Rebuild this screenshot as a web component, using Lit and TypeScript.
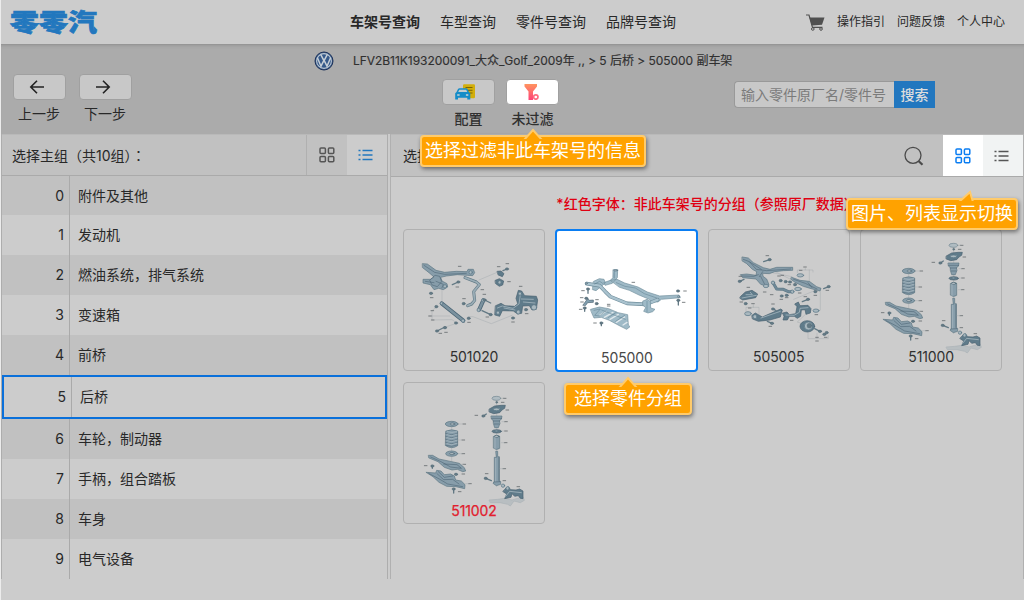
import { LitElement, html, svg, css } from "lit";
import { customElement } from "lit/decorators.js";
import { classMap } from "lit/directives/class-map.js";

const GROUPS = ["附件及其他", "发动机", "燃油系统，排气系统", "变速箱", "前桥", "后桥", "车轮，制动器", "手柄，组合踏板", "车身", "电气设备"];

const gridIcon = () => html`<svg width="16" height="16" viewBox="0 0 16 16" fill="none" stroke="currentColor" stroke-width="1.5">
  <rect x="1" y="1" width="5.4" height="5.4" rx="1"/><rect x="9.4" y="1" width="5.4" height="5.4" rx="1"/>
  <rect x="1" y="9.4" width="5.4" height="5.4" rx="1"/><rect x="9.4" y="9.4" width="5.4" height="5.4" rx="1"/></svg>`;

const listIcon = () => html`<svg class="list" width="15" height="12" viewBox="0 0 15 12" fill="none" stroke="currentColor" stroke-width="1.7">
  <path d="M0.5 1.5h2M0.5 6h2M0.5 10.5h2M4.5 1.5h10M4.5 6h10M4.5 10.5h10"/></svg>`;

/* Small callout marks: a dash and a numeral-like tick. */
const marks = (pts: number[][]) => pts.map(([x, y]) => svg`<path class="mark" d="M${x - 4} ${y}h8"/>`);
/* Bolts and nuts, drawn as a head with a short shank. */
const bolts = (pts: number[][]) => pts.map(([x, y, dx = 0, dy = 0]) => svg`
  <path class="shank" d="M${x} ${y}l${dx} ${dy}"/><ellipse class="nut" cx="${x}" cy="${y}" rx="5" ry="4"/>`);

const suspension = () => svg`
  <path class="thin" d="M142 190V245M185 310L150 322M253 180L305 158M222 290L235 290L290 311L352 286M112 272V300L172 299L182 306M104 288H112M112 272L124 262M112 288H165"/>
  <path class="pt" d="M84 131L98 132L124 151L150 157L185 154L217 155L220 148L236 148L240 158L234 167L218 166L188 164L155 168L138 172L142 183L157 191L159 201L146 209L132 205L118 209L107 194L85 189V178L107 178L118 171L103 158L84 143Z"/>
  <path class="dark" d="M88 136L120 157L150 163L215 160M106 180L121 166L135 169L141 185L128 200L113 195ZM124 184L146 193L142 203M92 184L118 188"/>
  <circle class="ring" cx="228" cy="157" r="5"/><circle class="ring" cx="151" cy="199" r="5"/>
  <path class="tubeo" d="M211 173L245 186L254 194L237 215L240 241L231 252L219 257"/><path class="tube" d="M211 173L245 186L254 194L237 215L240 241L231 252L219 257"/>
  <path class="armo" d="M141 250L206 302"/><path class="arm" d="M141 250L206 302"/><circle class="ring" cx="141" cy="250" r="4"/><circle class="ring" cx="205" cy="302" r="5"/>
  <path class="dk" d="M308 154L319 153L328 161L323 170L311 165ZM302 181L314 176L327 183L324 195L314 199L303 191Z"/>
  <circle class="ring" cx="315" cy="187" r="5"/>
  <path class="armo" d="M266 241L254 268"/><path class="arm" d="M266 241L254 268"/><circle class="ring" cx="266" cy="241" r="5"/><circle class="ring" cx="252" cy="270" r="5"/>
  <path class="dk" d="M303 257L319 250L331 257L360 259L369 251L364 235L371 211L381 213L390 227L425 229L429 240L425 268L412 270L404 257L384 258L381 280L369 282L356 273L323 272L315 289L301 285Z"/>
  <path class="light" d="M308 264L323 258L355 265L373 252L377 224M380 237L416 238M386 246L421 249M328 264L361 270"/>
  <circle class="ring" cx="376" cy="221" r="5"/><circle class="ring" cx="418" cy="262" r="8"/><circle class="ring" cx="371" cy="276" r="6"/><circle class="ring" cx="310" cy="278" r="5"/>
  ${bolts([[191, 186, -18, 8], [109, 220], [207, 251], [222, 295], [288, 284, -26, -12], [125, 260], [184, 309], [127, 333, 24, -12], [151, 323], [337, 147, -12, 5], [355, 294], [394, 269], [270, 240, 18, 9]])}
  ${marks([[195, 139], [188, 201], [111, 233], [263, 209], [208, 236], [269, 223], [312, 140], [338, 131], [343, 185], [378, 199], [278, 291], [223, 307], [355, 306], [396, 281], [106, 288], [113, 272], [114, 300], [137, 340], [154, 337]])}`;

const subframe = () => svg`
  <path class="pt" d="M190 149L203 149L202 173L187 190L165 196L161 188L181 181L188 174ZM131 184L148 176L162 178L166 189L154 199L138 212L128 209ZM182 181L201 178L224 189L264 201L292 216L329 228L387 225L391 233L334 238L324 246L305 245L298 238L267 225L238 211L209 202Z"/>
  <path class="tubeo" d="M110 191L149 197L165 214L181 230L231 250L288 253L323 239"/><path class="tube" d="M110 191L149 197L165 214L181 230L231 250L288 253L323 239"/>
  <path class="pt" d="M279 243L291 238L301 244L302 264L315 268L308 275L294 279L281 274L287 263L279 256Z"/>
  <path class="dark" d="M199 188L225 199L256 204L283 221L320 234M134 192L149 184L158 190M291 244V275M193 154V174"/>
  <ellipse class="ring" cx="197" cy="151" rx="6" ry="2"/><circle class="ring" cx="109" cy="190" r="3"/><circle class="ring" cx="386" cy="230" r="3"/>
  <path class="pt" d="M122 268L148 261L176 266L204 278L233 284L235 315L240 320L230 328L210 318L178 301L154 292L132 294L127 283Z"/>
  <path class="slot" d="M150 285L169 273M163 292L189 277M180 298L205 283M199 307L224 291M219 315L231 307"/>
  <path class="dark" d="M132 271L151 267L134 286L148 288L170 270M174 293L199 277M197 304L224 286M155 270L226 298"/>
  <path class="dk" d="M99 255L113 236L119 241L130 240L130 247L113 248L107 256Z"/>
  ${bolts([[114, 207, 0, 13], [384, 213], [385, 241, 0, 14], [104, 264, 0, 10], [109, 235], [140, 251], [154, 309, 0, 8]])}
  ${marks([[99, 212], [92, 268], [95, 233], [96, 246], [141, 239], [176, 258], [176, 253], [250, 187], [405, 213], [401, 247], [135, 309]])}`;

const axle = () => svg`
  <path class="thin" d="M190 154L270 170M175 184L193 199M275 238L355 205V270M320 274L286 306L310 314M310 145V150H286V158M310 150H333V156M322 150V187M154 254V262H132V272M154 262H171V285M318 330V356H379V347M345 340V356M210 150L270 180"/>
  <path class="pt" d="M121 111L139 114L154 128L184 143L204 148L224 142L272 142V151L244 152L218 155L202 161L182 160L183 169L194 177L201 194L192 198L176 193L162 177L122 173L115 164L134 162L162 166L164 155L151 148L134 131L121 123Z"/>
  <path class="dark" d="M124 118L142 125L163 148L194 152L266 147M121 168L155 169L169 164M176 169L187 191M182 155L172 170M143 126L178 148"/>
  <path class="tubeo" d="M213 188L224 207L244 208L259 215L270 215"/><path class="tube dkt" d="M213 188L224 207L244 208L259 215L270 215"/><circle class="ring" cx="213" cy="188" r="5"/><circle class="ring" cx="271" cy="215" r="5"/>
  <path class="pt" d="M269 172L294 181L322 184L344 200L357 205L354 213L331 207L304 199L279 187L267 178Z"/><path class="dark" d="M275 178L310 190L345 207M318 188L330 203"/>
  <path class="dk" d="M116 229L130 216L150 211L167 222L161 233L122 240L114 235Z"/><path class="light" d="M120 234L163 226M132 224H151L145 217"/>
  <path class="dk" d="M150 286L160 279L169 284L181 291L208 279L236 267L241 270L235 291L204 300L169 304L152 297Z"/><path class="light" d="M177 294L235 274"/><circle class="ring" cx="159" cy="290" r="6"/>
  <path class="dk" d="M242 279L255 276L262 284L281 281L285 260L278 252L289 246L294 257L318 256L327 266L325 279L312 283L309 269L298 270L296 289L286 295L277 289H262L256 300L243 300L246 290Z"/><path class="light" d="M252 285L276 286L292 277L294 265L318 263"/>
  <ellipse class="dk" cx="316" cy="319" rx="22" ry="17"/><circle class="ring" cx="319" cy="318" r="12"/><circle class="nut" cx="322" cy="317" r="7"/>
  <ellipse class="ring" cx="138" cy="281" rx="10" ry="6"/><ellipse class="ring" cx="295" cy="166" rx="10" ry="5"/><ellipse class="ring" cx="288" cy="207" rx="10" ry="5"/><ellipse class="ring" cx="342" cy="272" rx="9" ry="5"/><ellipse class="ring" cx="192" cy="198" rx="8" ry="5"/>
  ${bolts([[203, 119, -18, 6], [113, 184, 13, -6], [380, 200, -15, 6], [131, 251], [213, 267, 9, 5], [210, 310, -14, -6], [318, 238, -17, 7], [354, 334, -16, -8], [367, 343], [374, 338], [236, 182], [251, 185], [239, 228], [254, 226], [264, 186], [340, 215], [279, 194]])}
  ${marks([[196, 107], [115, 169], [139, 202], [118, 246], [143, 264], [153, 251], [213, 252], [209, 224], [188, 216], [231, 168], [241, 166], [238, 238], [254, 233], [262, 194], [293, 219], [343, 284], [376, 211], [340, 226], [309, 141], [205, 319], [269, 301], [345, 363], [345, 352], [371, 352], [310, 230], [296, 151]])}`;

const strut = () => svg`
  <path class="thin" d="M161 150V270M296 74V340M161 270V290"/>
  <ellipse class="pt" cx="161" cy="153" rx="19" ry="8"/><ellipse class="hole" cx="163" cy="153" rx="7" ry="3"/>
  <path class="pt" d="M144 174Q161 167 179 174V218Q161 230 143 218Z"/>
  <path class="dark" d="M143 181Q161 190 179 180M143 190Q161 199 179 189M143 199Q161 208 179 198M143 208Q161 217 179 207M144 217Q161 224 178 216"/><path class="light" d="M148 176Q161 182 176 176M147 185Q161 192 176 184M147 194Q161 201 176 193M147 203Q161 210 176 202M147 212Q161 219 176 211"/>
  <ellipse class="pt" cx="161" cy="242" rx="18" ry="8"/><ellipse class="hole" cx="162" cy="242" rx="7" ry="3"/>
  <path class="pt" d="M92 247L104 247L123 258L161 266L184 271L199 284L203 294L194 296L178 289L162 291L139 283L120 266L93 255Z"/><path class="dark" d="M98 252L129 266L158 282L190 286M137 273L177 275L188 284"/>
  <path class="pt" d="M85 298L113 300L116 292L129 294L139 305L158 303L169 309L173 321L190 324L201 335L200 347L174 341L146 340L123 328L106 312Z"/><path class="dark" d="M92 301L124 318L149 333L194 341M117 302L137 320L164 319L183 333M121 296L139 313L164 309"/>
  <ellipse class="pale" cx="295" cy="76" rx="13" ry="6"/><circle class="nut" cx="296" cy="88" r="3"/>
  <path class="dk" d="M274 108L290 99L310 97L322 97L320 106L312 111L305 119L287 122L274 117Z"/><ellipse class="ring" cx="296" cy="109" rx="10" ry="4"/>
  <path class="pt" d="M280 129H312L310 139L304 143L306 151L301 164H290L286 151V143L281 139Z"/><path class="dark" d="M281 136H311M286 144H305M289 153H303"/>
  <ellipse class="dk" cx="296" cy="175" rx="14" ry="5"/><ellipse class="ring" cx="296" cy="174" rx="5" ry="2"/>
  <path class="pt" d="M287 190Q296 184 305 190V226Q296 233 287 226Z"/><ellipse class="hole" cx="296" cy="190" rx="7" ry="3"/><path class="light" d="M291 194V227"/>
  <path class="pt" d="M294 235H299V251H304V325H308V334L295 338L285 331L289 325V253H294Z"/><path class="light" d="M293 256V325"/><path class="dark" d="M303 254V322M288 327L305 326"/>
  <path class="ghost" d="M274 381L299 379L322 376L342 381L375 371L379 382L367 389L348 384L337 399L329 394L306 389L278 389Z"/>
  <path class="dk" d="M322 347L331 341L338 350L354 351L365 348L375 354V377L367 376L361 368L350 370L342 362L339 373L320 377L326 363L315 356Z"/><path class="light" d="M323 370L335 355L370 359"/><circle class="ring" cx="315" cy="338" r="5"/><circle class="ring" cx="329" cy="346" r="5"/>
  ${bolts([[256, 129, 9, -6], [263, 316, 17, 7], [103, 279, 0, 7], [174, 304], [167, 348, 0, 12]])}
  ${marks([[199, 153], [196, 201], [196, 242], [199, 274], [196, 303], [216, 332], [185, 356], [83, 278], [320, 76], [314, 88], [328, 111], [235, 127], [324, 146], [324, 174], [323, 209], [319, 287], [266, 302], [319, 323], [361, 341]])}
  <path class="thin" d="M180 153h13M179 201h13M180 242h13M187 274h10M203 332h10M307 76h10M310 209h10M306 287h10M312 146h8M312 174h8"/>`;

@customElement("part-tile")
class PartTile extends LitElement {
  static properties = { code: {}, art: {}, view: {}, active: { type: Boolean }, foreign: { type: Boolean } };
  declare code: string; declare art: () => unknown; declare view: string; declare active: boolean; declare foreign: boolean;
  static styles = css`
    :host { display: block; }
    .tile { box-sizing: border-box; width: 142px; height: 142px; border: 1px solid #b0b0b0; border-radius: 4px; display: grid; grid-template: 100% / 100%; }
    .active { width: 143px; height: 143px; background: #fff; border: 2px solid #0a7df2; }
    .tile > * { grid-area: 1 / 1; }
    .art { width: 142px; height: 142px; margin: -1px; }
    .active .art { width: 143px; height: 143px; margin: -2px; }
    .code { align-self: end; justify-self: center; font: 14px/18px Inter, "Liberation Sans", sans-serif; color: #303030; margin-bottom: 4px; letter-spacing: -.1px; }
    .active .code { margin-bottom: 3px; color: #484848; }
    .code.foreign { color: #e1202e; margin-bottom: 3px; -webkit-text-stroke: .25px; }
    path, ellipse, circle { stroke-linejoin: round; stroke-linecap: round; }
    .pt { fill: #879daa; stroke: #5c7582; stroke-width: 2; }
    .pale { fill: #b0bcc2; stroke: #6f8590; stroke-width: 2; }
    .dk { fill: #5f7b8a; stroke: #48616f; stroke-width: 2; }
    .dark { fill: none; stroke: #425c6b; stroke-width: 2; opacity: .75; }
    .light { fill: none; stroke: #a4b4bd; stroke-width: 2.5; }
    .slot { fill: none; stroke: #dfe8ec; stroke-width: 4; }
    .thin { fill: none; stroke: #9da4a8; stroke-width: 1.2; }
    .mark { fill: none; stroke: #6b7073; stroke-width: 2.6; }
    .shank { fill: none; stroke: #637984; stroke-width: 4; }
    .nut { fill: #637984; stroke: #4c6370; stroke-width: 1; }
    .ring { fill: #a9b8bf; stroke: #5d7988; stroke-width: 2.2; }
    .hole { fill: #bcc5c9; stroke: #4b6573; stroke-width: 2; }
    .tubeo { fill: none; stroke: #607985; stroke-width: 9; } .tube { fill: none; stroke: #9aacb5; stroke-width: 5.5; } .tube.dkt { stroke: #6f8998; }
    .armo { fill: none; stroke: #4b6575; stroke-width: 12; } .arm { fill: none; stroke: #7b929f; stroke-width: 7.5; }
    .ghost { fill: #b8bec1; stroke: #aab2b6; stroke-width: 2; }
    .active .pt { fill: #9fbac7; stroke: #718f9d; } .active .dark { stroke: #5c7d8d; }
    .active .tubeo { stroke: #718f9d; stroke-width: 11; } .active .tube { stroke: #a9c2ce; stroke-width: 7; } .active .dk { fill: #829faf; }
  `;
  render() {
    return html`<div class=${classMap({ tile: true, active: this.active })}>
      <svg class="art" viewBox=${this.view}>${this.art()}</svg>
      <div class=${classMap({ code: true, foreign: this.foreign })}>${this.code}</div></div>`;
  }
}

@customElement("app-root")
class AppRoot extends LitElement {
  static styles = css`
    :host { display: block; width: 1024px; height: 600px; overflow: hidden; position: relative; background: #ccc; color: #282828;
      font-family: Inter, "Noto Sans CJK SC", sans-serif; font-size: 14px; line-height: 20px; box-sizing: border-box; border-left: 1px solid #ececec; }
    * { box-sizing: border-box; }
    svg { display: block; flex: none; }
    .top { height: 45px; display: flex; align-items: center; border-bottom: 1px solid #969696; }
    .logo { width: 340px; padding-left: 9px; font: 900 29px/36px "Noto Sans CJK SC", sans-serif; color: #2277be; height: 36px; transform: scaleY(.84); white-space: nowrap; margin-top: -4px; -webkit-text-stroke: .8px; }
    .nav { display: flex; gap: 20px; padding-left: 9px; flex: 1; }
    .on { font-weight: 700; }
    .user { display: flex; gap: 12px; padding-right: 19px; font-size: 12px; align-items: center; }
    .tools { height: 89px; background: #ababab; box-shadow: inset 0 3px 3px -2px #999; display: grid; grid-template-columns: 302px 1fr 290px; }
    .steps { display: flex; gap: 14px; padding: 29px 0 0 12px; }
    .step { display: flex; flex-direction: column; align-items: center; gap: 4px; }
    .btn { width: 53px; height: 26px; border-radius: 4px; background: #c8c8c8; border: 1px solid #a0a0a0; display: grid; place-items: center; }
    .steps .step { width: 52px; }
    .steps .btn { padding-right: 5px; }
    .lit { background: #fff; padding-right: 2px; }
    .config { padding-right: 7px; }
    .mid { padding-top: 6px; }
    .crumb { display: flex; align-items: center; gap: 19px; font-size: 12px; height: 20px; padding-left: 11px; white-space: nowrap; color: #303030; -webkit-text-stroke: .15px; letter-spacing: -.04px; }
    .acts { display: flex; gap: 11px; padding: 8px 0 0 139px; }
    .acts .step { font-weight: 500; color: #303030; }
    .search { display: flex; margin: 36px 0 0; width: 201px; height: 27px; }
    .input { width: 160px; border: 1px solid #999; border-right: 0; border-radius: 4px 0 0 4px; background: #c8c8c8; color: #7b7b7b; padding: 3px 0 0 6px; white-space: nowrap; }
    .go { width: 41px; background: #2277bf; color: #ddd; font-weight: 500; text-align: center; padding-top: 4px; }
    .main { display: flex; gap: 2px; height: 445px; }
    .left { width: 387px; border: solid #adadad; border-width: 0 1px; }
    .bar { height: 42px; display: flex; background: #c1c1c1; border-bottom: 1px solid #aaa; border-top: 1px solid #b9b9b9; align-items: center; }
    .left .title { flex: 1; padding-left: 10px; white-space: nowrap; }
    .colon { font-family: "Noto Sans CJK TC", sans-serif; }
    .cell { width: 40px; height: 100%; display: grid; place-items: center; color: #555; }
    .list { margin-right: 3px; }
    .left .cell:nth-child(2) { border-left: 1px solid #b0b0b0; width: 41px; }
    .left .sel { background: #ccc; color: #2277be; }
    .row { height: 40px; display: flex; align-items: center; background: #ccc; }
    .row:nth-child(even) { background: #c1c1c1; }
    .row:nth-child(2) { height: 39px; }
    .num { width: 68px; height: 100%; text-align: right; padding-right: 5px; border-right: 1px solid #aaa; display: flex; align-items: center; justify-content: flex-end; }
    .name { padding-left: 8px; }
    .row.cur { height: 44px; background: #ccc; border: 2px solid #0a70da; }
    .right { flex: 1; border: solid #b0b0b0; border-width: 0 1px; }
    .right .bar { height: 43px; }
    .right .title { flex: 1; padding-left: 12px; }
    .glass { margin-right: 19px; }
    .pair { display: flex; height: 100%; background: #fff; }
    .pair .cell:first-child { color: #0a7df2; }
    .pair .cell:last-child { background: #f1f3f3; }
    .note { color: #e00012; font-weight: 500; text-align: center; padding: 17px 0 15px; white-space: nowrap; }
    .tiles { display: grid; grid-template-columns: repeat(4, 142px); column-gap: 10.4px; row-gap: 11px; grid-auto-rows: 142px; padding-left: 12px; }
    .tip { position: absolute; height: 32px; border: 2px solid #ffcb6b; border-radius: 4px; background: #ffa200; color: #fff; font-size: 18px; line-height: 28px; text-align: center; white-space: nowrap; box-shadow: 1px 2px 4px #0007; }
    .arrow { position: absolute; top: -10px; }
    .t1 { left: 419px; top: 135px; width: 226px; } .t1 .arrow { left: 100px; }
    .t2 { left: 845px; top: 198px; width: 172px; } .t2 .arrow { left: 110px; top: -11px; }
    .t3 { left: 563px; top: 383px; width: 128px; } .t3 .arrow { left: 51px; }
  `;

  render() {
    const arrow = (d: string) => html`<svg class="arrow" width="22" height="12" viewBox="0 0 22 12"><path d=${d} fill="#ffa200" stroke="#ffcb6b" stroke-width="2"/></svg>`;
    return html`
      <header class="top">
        <div class="logo">零零汽</div>
        <nav class="nav"><span class="on">车架号查询</span><span>车型查询</span><span>零件号查询</span><span>品牌号查询</span></nav>
        <div class="user">
          <svg width="19" height="17" viewBox="0 0 19 17"><path d="M0 1H3L6.5 13.3H16.5" fill="none" stroke="#505050" stroke-width="1.2"/><path d="M3.5 3.5H18.5L16 10.8L5.8 11.4Z" fill="#505050"/><circle cx="6.8" cy="15" r="1.3" fill="none" stroke="#505050"/><circle cx="15" cy="15" r="1.3" fill="none" stroke="#505050"/></svg>
          <span>操作指引</span><span>问题反馈</span><span>个人中心</span>
        </div>
      </header>
      <section class="tools">
        <div class="steps">
          <div class="step"><div class="btn"><svg width="16" height="16" viewBox="0 0 16 16" fill="none" stroke="#222" stroke-width="1.6"><path d="M15 8H2M8 1.8L1.8 8L8 14.2"/></svg></div>上一步</div>
          <div class="step"><div class="btn"><svg width="16" height="16" viewBox="0 0 16 16" fill="none" stroke="#222" stroke-width="1.6"><path d="M1 8H14M8 1.8L14.2 8L8 14.2"/></svg></div>下一步</div>
        </div>
        <div class="mid">
          <div class="crumb">
            <svg width="20" height="20" viewBox="0 0 20 20"><circle cx="10" cy="10" r="9" fill="#35598a" stroke="#1d3158" stroke-width="1"/><circle cx="10" cy="10" r="7.4" fill="none" stroke="#bdc7d2" stroke-width="1.1"/><path d="M3.4 6.8L7 15.2L10 9.2L13 15.2L16.6 6.8M6.8 3.7L10 9.8L13.2 3.7" fill="none" stroke="#c6ced6" stroke-width="1.5"/></svg>
            <span>LFV2B11K193200091_大众_Golf_2009年 ,, &gt; 5 后桥 &gt; 505000 副车架</span>
          </div>
          <div class="acts">
            <div class="step"><div class="btn config"><svg width="20" height="16" viewBox="0 0 20 16"><path d="M8 1.5Q8 0.3 9.2 0.3H18.8Q20 0.3 20 1.5V13Q20 14.3 18.8 14.3H14L8 5Z" fill="#d2ae0b"/><path d="M10.5 3.5H17.5M12.5 6.3H17.5M14.5 9H17.5" stroke="#7d6500"/><path d="M1.5 8L3 5Q3.5 4.2 4.5 4.2H11Q12 4.2 12.5 5L14 8L15.3 9.3V15.6H12.3V13.8H3V15.6H0.2V9.3Z" fill="#148cc8"/><path d="M4.3 5.8H11.2L12.3 8H3.2Z" fill="#c2cccf"/><path d="M2.2 11H4.6M10.9 11H13.3" stroke="#c8d2d5" stroke-width="1.4"/></svg></div>配置</div>
            <div class="step"><div class="btn lit"><svg width="15" height="16" viewBox="0 0 15 16"><defs><linearGradient id="f" x2="0" y2="1"><stop stop-color="#ff9460"/><stop offset="1" stop-color="#ff4378"/></linearGradient></defs><path d="M0.5 0H13V2.5L9 7.5V16H4.5V7.5L0.5 2.5Z" fill="url(#f)"/><circle cx="11.8" cy="13" r="2.2" fill="#fff" stroke="#ff6b80" stroke-width="1.7"/></svg></div>未过滤</div>
          </div>
        </div>
        <div class="search"><div class="input">输入零件原厂名/零件号</div><div class="go">搜索</div></div>
      </section>
      <main class="main">
        <section class="left">
          <div class="bar"><div class="title">选择主组（共10组）<span class="colon" lang="zh-TW">：</span></div><div class="cell">${gridIcon()}</div><div class="cell sel">${listIcon()}</div></div>
          ${GROUPS.map((name, i) => html`<div class=${classMap({ row: true, cur: i === 5 })}><div class="num">${i}</div><div class="name">${name}</div></div>`)}
        </section>
        <section class="right">
          <div class="bar"><div class="title">选择分组</div>
            <svg class="glass" width="20" height="20" viewBox="0 0 20 20" fill="none" stroke="#4b4b4b"><circle cx="9" cy="9.3" r="8" stroke-width="1.3"/><path d="M14.5 15L18.5 18.7" stroke-width="2.2"/></svg>
            <div class="pair"><div class="cell">${gridIcon()}</div><div class="cell">${listIcon()}</div></div>
          </div>
          <div class="note">*红色字体：非此车架号的分组（参照原厂数据）</div>
          <div class="tiles">
            <part-tile code="501020" .art=${suspension} view="25 27 426 426"></part-tile>
            <part-tile code="505000" .art=${subframe} view="15 27 429 429" active></part-tile>
            <part-tile code="505005" .art=${axle} view="18 27 426 426"></part-tile>
            <part-tile code="511000" .art=${strut} view="15 27 426 426"></part-tile>
            <part-tile code="511002" .art=${strut} view="15 27 426 426" foreign></part-tile>
          </div>
        </section>
      </main>
      <div class="tip t1">${arrow("M2 13L11 3L20 13")}选择过滤非此车架号的信息</div>
      <div class="tip t2">${arrow("M1 13L12 3L15 13")}图片、列表显示切换</div>
      <div class="tip t3">${arrow("M2 13L11 3L20 13")}选择零件分组</div>`;
  }
}
